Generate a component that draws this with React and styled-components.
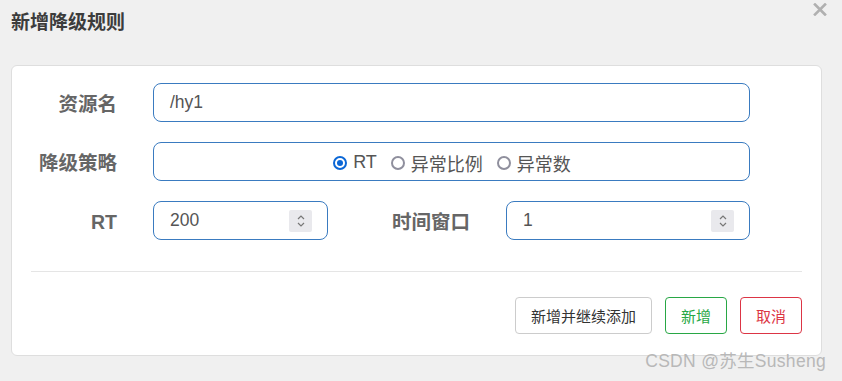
import React, { useState } from 'react';
import styled, { createGlobalStyle } from 'styled-components';

const GlobalStyle = createGlobalStyle`
  html, body {
    margin: 0;
    padding: 0;
    background: #f0f0f0;
    font-family: "Liberation Sans", "Noto Sans CJK SC", sans-serif;
  }
`;

const Page = styled.div`
  width: 842px;
  height: 381px;
  background: #f0f0f0;
  padding: 0 20px 0 11px;
  box-sizing: border-box;
  position: relative;
  overflow: hidden;
`;

const Header = styled.div`
  height: 65px;
  display: flex;
  align-items: flex-start;
  padding-top: 11px;
  box-sizing: border-box;
`;

const Title = styled.h4`
  margin: 0;
  font-size: 19px;
  font-weight: bold;
  color: #3c3c3c;
  line-height: 24px;
`;

const Close = styled.button`
  position: absolute;
  right: 14px;
  top: 2px;
  width: 16px;
  height: 14px;
  padding: 0;
  border: none;
  background: transparent;
  display: flex;
  align-items: center;
  justify-content: center;
  cursor: pointer;
`;

const Card = styled.div`
  width: 811px;
  height: 291px;
  box-sizing: border-box;
  background: #fff;
  border: 1px solid #dedede;
  border-radius: 6px;
  padding-top: 17px;
  display: flex;
  flex-direction: column;
`;

const Row = styled.div`
  display: flex;
  align-items: center;
  padding-right: 71px;
  margin-bottom: ${(p) => (p.$last ? 0 : 20)}px;
`;

const Label = styled.label`
  width: ${(p) => p.$w || 105}px;
  flex: none;
  text-align: right;
  margin-right: 36px;
  font-size: 19.5px;
  font-weight: bold;
  color: #666;
  line-height: 24px;
  padding-top: 3px;
`;

const Field = styled.div`
  height: 39px;
  box-sizing: border-box;
  border: 1px solid #3a7bc0;
  border-radius: 8px;
  display: flex;
  align-items: center;
  padding: 0 15px 0 16px;
  font-size: 17.5px;
  color: #555;
  width: ${(p) => (p.$w ? `${p.$w}px` : 'auto')};
  flex: ${(p) => (p.$w ? 'none' : 1)};
  justify-content: ${(p) => (p.$center ? 'center' : 'flex-start')};
`;

const Value = styled.span`
  flex: 1;
`;

const Spinner = styled.span`
  width: 23px;
  height: 22px;
  background: #e9e9ed;
  border-radius: 2px;
  display: flex;
  align-items: center;
  justify-content: center;
`;

const RadioItem = styled.span`
  display: inline-flex;
  align-items: center;
  margin-left: ${(p) => (p.$first ? 0 : 14)}px;
  padding-top: 2px;
  font-size: 18px;
  color: #555;
  cursor: pointer;
`;

const RadioDot = styled.span`
  width: 14px;
  height: 14px;
  box-sizing: border-box;
  border-radius: 50%;
  border: 2px solid ${(p) => (p.$on ? '#0b67d6' : '#8f8f9d')};
  margin-right: 6px;
  display: inline-flex;
  align-items: center;
  justify-content: center;
  &::after {
    content: '';
    width: 6px;
    height: 6px;
    border-radius: 50%;
    background: ${(p) => (p.$on ? '#0b67d6' : 'transparent')};
  }
`;

const Divider = styled.hr`
  margin: 31px 19px 0 19px;
  border: none;
  border-top: 1px solid #e5e5e5;
`;

const Footer = styled.div`
  display: flex;
  justify-content: flex-end;
  gap: 13px;
  padding: 25px 19px 0 0;
`;

const Button = styled.button`
  height: 37px;
  box-sizing: border-box;
  padding: 0 15px;
  background: #fff;
  border: 1px solid ${(p) => p.$border};
  border-radius: 4px;
  color: ${(p) => p.$color};
  font-size: 15px;
  font-family: "Liberation Sans", "Noto Sans CJK SC", sans-serif;
  cursor: pointer;
`;

const Watermark = styled.div`
  position: absolute;
  right: 16px;
  bottom: 9px;
  font-size: 17.5px;
  color: #b8b8b8;
  letter-spacing: 0.3px;
`;

const Chevrons = () => (
  <svg width="10" height="16" viewBox="0 0 10 16">
    <path d="M2 6 L5 3 L8 6" fill="none" stroke="#777" strokeWidth="1.2" />
    <path d="M2 10 L5 13 L8 10" fill="none" stroke="#777" strokeWidth="1.2" />
  </svg>
);

const CloseIcon = () => (
  <svg width="14" height="13" viewBox="0 0 14 13">
    <path d="M2 1.5 L12 11.5 M12 1.5 L2 11.5" stroke="#b0b0b0" strokeWidth="2.6" strokeLinecap="square" />
  </svg>
);

const strategies = ['RT', '异常比例', '异常数'];

const App = () => {
  const [grade, setGrade] = useState(0);

  return (
    <Page>
      <GlobalStyle />
      <Header>
        <Title>新增降级规则</Title>
      </Header>
      <Close aria-label="close"><CloseIcon /></Close>
      <Card>
        <Row>
          <Label>资源名</Label>
          <Field>/hy1</Field>
        </Row>
        <Row>
          <Label>降级策略</Label>
          <Field $center>
            {strategies.map((s, i) => (
              <RadioItem key={s} $first={i === 0} onClick={() => setGrade(i)}>
                <RadioDot $on={grade === i} />
                {s}
              </RadioItem>
            ))}
          </Field>
        </Row>
        <Row $last>
          <Label>RT</Label>
          <Field $w={175}>
            <Value>200</Value>
            <Spinner><Chevrons /></Spinner>
          </Field>
          <Label $w={142}>时间窗口</Label>
          <Field>
            <Value>1</Value>
            <Spinner><Chevrons /></Spinner>
          </Field>
        </Row>
        <Divider />
        <Footer>
          <Button $border="#ccc" $color="#333">新增并继续添加</Button>
          <Button $border="#28a745" $color="#28a745">新增</Button>
          <Button $border="#dc3545" $color="#dc3545">取消</Button>
        </Footer>
      </Card>
      <Watermark>CSDN @苏生Susheng</Watermark>
    </Page>
  );
};

export default App;
